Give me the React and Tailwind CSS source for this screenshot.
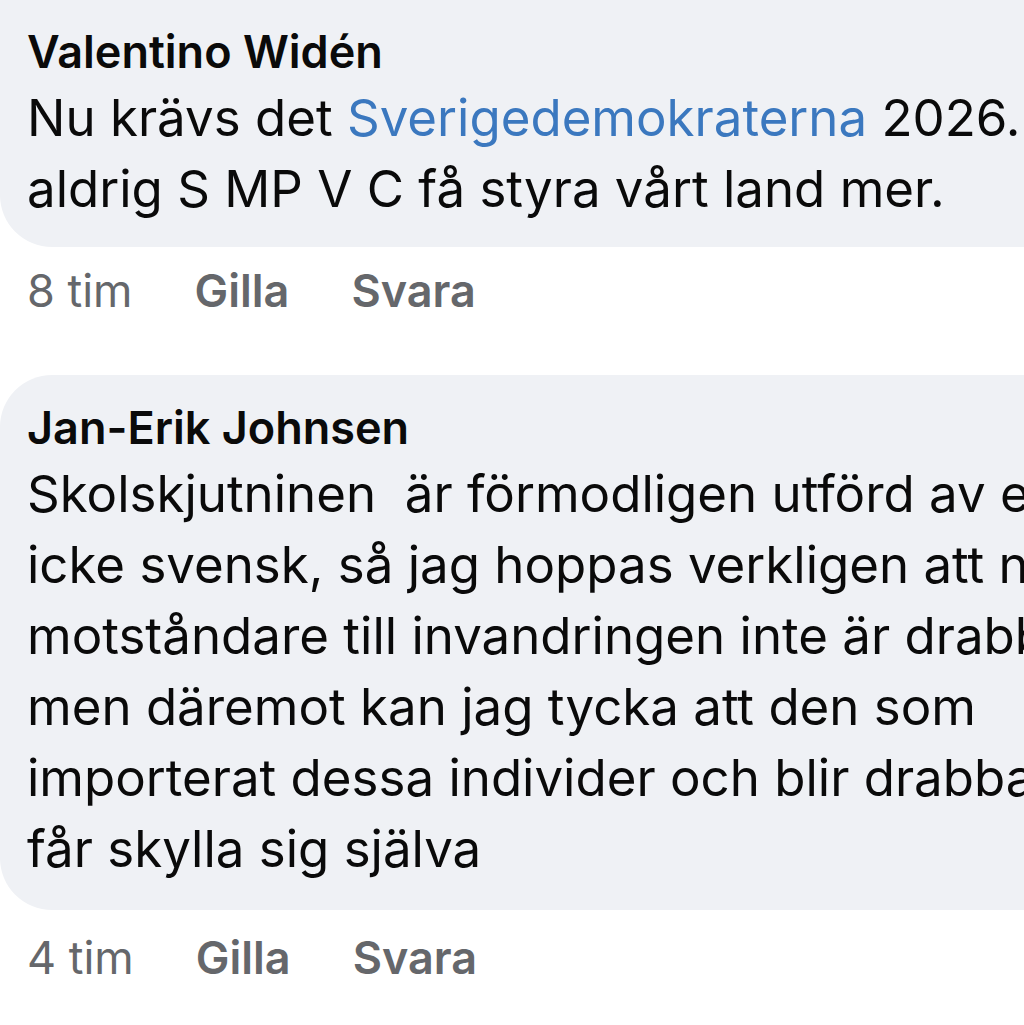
import React from 'react'

const font = { fontFamily: 'Inter, "Noto Sans", sans-serif' }

const Meta = ({ time }) => (
  <div className="flex items-center gap-[62px] pl-[27px] text-[45px] leading-[60px] text-[#65676b]">
    <span>{time}</span>
    <span className="font-semibold">Gilla</span>
    <span className="font-semibold">Svara</span>
  </div>
)

const App = () => {
  return (
    <div className="h-[1025px] w-full overflow-hidden bg-white" style={font}>
      <div className="overflow-hidden whitespace-nowrap rounded-bl-[52px] bg-[#eff1f5] pl-[27px] pt-[21px] pb-[23px] text-[#0a0a0a]">
        <p className="text-[45px] font-semibold leading-[61px]">Valentino Widén</p>
        <p className="text-[51px] leading-[71px]">
          Nu krävs det <span className="text-[#3b78bf]">Sverigedemokraterna</span> 2026. Låt
        </p>
        <p className="text-[51px] leading-[71px]">aldrig S MP V C få styra vårt land mer.</p>
      </div>

      <div className="mt-[14px]">
        <Meta time="8 tim" />
      </div>

      <div className="mt-[54px] overflow-hidden whitespace-nowrap rounded-l-[52px] bg-[#eff1f5] pl-[27px] pt-[22px] pb-[26px] text-[#0a0a0a]">
        <p className="text-[45px] font-semibold leading-[61px]">Jan-Erik Johnsen</p>
        <p className="whitespace-pre text-[51px] leading-[71px]">Skolskjutninen  är förmodligen utförd av en</p>
        <p className="text-[51px] leading-[71px]">icke svensk, så jag hoppas verkligen att ni</p>
        <p className="text-[51px] leading-[71px]">motståndare till invandringen inte är drabbade</p>
        <p className="text-[51px] leading-[71px]">men däremot kan jag tycka att den som</p>
        <p className="text-[51px] leading-[71px]">importerat dessa individer och blir drabbade</p>
        <p className="text-[51px] leading-[71px]">får skylla sig själva</p>
      </div>

      <div className="mt-[18px]">
        <Meta time="4 tim" />
      </div>
    </div>
  )
}

export default App
